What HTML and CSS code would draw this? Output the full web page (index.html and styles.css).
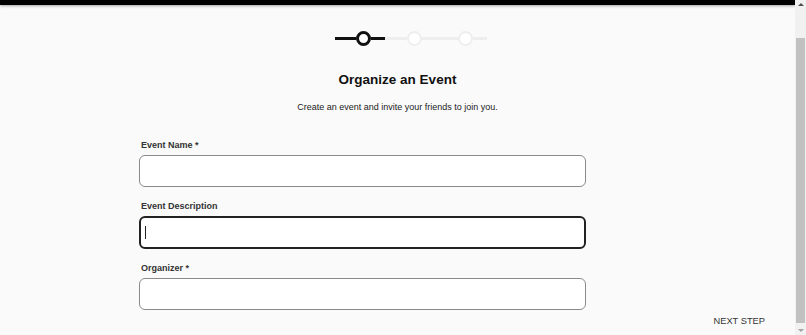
FILE: index.html
```html
<!DOCTYPE html>
<html lang="en">
<head>
    <meta charset="UTF-8">
    <meta name="viewport" content="width=device-width, initial-scale=1.0">
    <title>Organize an Event</title>
    <link rel="stylesheet" href="styles.css">
</head>
<body>
    <div class="topbar"></div>
    <div class="page">
        <div class="stepper">
            <span class="line active short"></span>
            <span class="dot active"></span>
            <span class="line active short"></span>
            <span class="line short2"></span>
            <span class="dot"></span>
            <span class="line long"></span>
            <span class="dot"></span>
            <span class="line tail"></span>
        </div>

        <h2 class="title">Organize an Event</h2>
        <p class="subtitle">Create an event and invite your friends to join you.</p>

        <form class="form">
            <div class="form-group">
                <label for="event-name">Event Name *</label>
                <input type="text" id="event-name">
            </div>
            <div class="form-group">
                <label for="event-desc">Event Description</label>
                <div class="field">
                    <input type="text" id="event-desc" class="focused">
                    <span class="caret"></span>
                </div>
            </div>
            <div class="form-group">
                <label for="organizer">Organizer *</label>
                <input type="text" id="organizer">
            </div>
        </form>

        <div class="actions">
            <button type="button" class="next">NEXT STEP</button>
        </div>
    </div>

    <div class="scrollbar">
        <div class="arrow up"></div>
        <div class="thumb"></div>
        <div class="arrow down"></div>
    </div>
</body>
</html>
```

FILE: styles.css
```css
* {
    box-sizing: border-box;
}
html, body {
    margin: 0;
    height: 100%;
    overflow: hidden;
}
body {
    background: #fafafa;
    font-family: "Liberation Sans", Arial, sans-serif;
    color: #111;
}
.topbar {
    height: 5px;
    background: #000;
    box-shadow: 0 1px 3px rgba(0, 0, 0, 0.35);
    margin-right: 11px;
}
.page {
    width: 795px;
    padding-top: 26px;
}
.stepper {
    display: flex;
    align-items: center;
    height: 15px;
    padding-left: 335px;
}
.line {
    height: 3px;
    background: #eeeeee;
}
.line.active {
    background: #111;
}
.line.short {
    width: 21px;
}
.line.short + .dot + .line.short {
    width: 14px;
}
.line.short2 {
    width: 22px;
}
.line.long {
    width: 36px;
}
.line.tail {
    width: 14px;
}
.dot {
    width: 15px;
    height: 15px;
    border-radius: 50%;
    border: 2px solid #eeeeee;
    background: #fff;
}
.dot.active {
    border: 3px solid #111;
}
.title {
    margin: 24px 0 0;
    text-align: center;
    font-size: 13.5px;
    font-weight: bold;
    line-height: 20px;
}
.subtitle {
    margin: 10px 0 0;
    text-align: center;
    font-size: 9px;
    line-height: 14px;
    color: #1a1a1a;
}
.form {
    width: 447px;
    margin: 25px 0 0 139px;
}
.form-group {
    margin-bottom: 13px;
}
.form-group:last-child {
    margin-bottom: 0;
}
label {
    display: block;
    font-size: 9px;
    font-weight: bold;
    color: #333;
    padding-left: 2px;
    line-height: 12px;
    margin-bottom: 4px;
}
input {
    display: block;
    width: 100%;
    height: 32px;
    border: 1px solid #8a8a8a;
    border-radius: 6px;
    background: #fff;
    padding: 0 6px;
    font-size: 12px;
    outline: none;
}
input.focused {
    border: 2px solid #222;
    height: 33px;
}
.field {
    position: relative;
}
.caret {
    position: absolute;
    left: 6px;
    top: 10px;
    width: 1px;
    height: 13px;
    background: #222;
}
.actions {
    display: flex;
    justify-content: flex-end;
    padding-right: 30px;
    margin-top: 5px;
}
.next {
    background: none;
    border: none;
    font-family: "Liberation Sans", Arial, sans-serif;
    font-size: 9.3px;
    line-height: 12px;
    color: #333;
    padding: 0;
    cursor: pointer;
}
.scrollbar {
    position: fixed;
    top: 0;
    right: 0;
    width: 11px;
    height: 100%;
    background: #f1f1f1;
    display: flex;
    flex-direction: column;
    align-items: center;
}
.arrow {
    width: 0;
    height: 0;
    border-left: 3px solid transparent;
    border-right: 3px solid transparent;
    margin: 3px 0;
}
.arrow.up {
    border-bottom: 3px solid #505050;
}
.arrow.down {
    border-top: 3px solid #a3a3a3;
}
.thumb {
    width: 9px;
    flex: 1;
    margin: 29px 0 3px;
    background: #c1c1c1;
}
```
